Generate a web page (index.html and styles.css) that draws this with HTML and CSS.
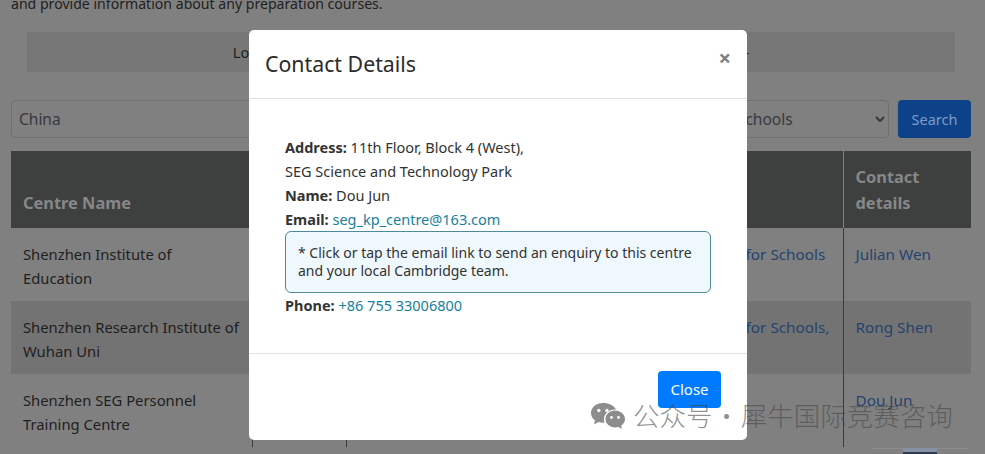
FILE: index.html
```html
<!DOCTYPE html>
<html lang="en">
<head>
    <meta charset="UTF-8">
    <title>Find a centre</title>
    <link rel="stylesheet" href="styles.css">
</head>
<body>
    <p class="intro">and provide information about any preparation courses.</p>
    <div class="notice">Look for a centre near you by selecting a country and the Cambridge exam -</div>

    <form class="search-row">
        <input class="search-input" type="text" value="China">
        <select class="search-select">
            <option>A2 Key for Schools</option>
        </select>
        <button type="button" class="search-btn">Search</button>
    </form>

    <table class="centres">
        <colgroup>
            <col class="col-name">
            <col class="col-city">
            <col class="col-exam">
            <col class="col-contact">
        </colgroup>
        <thead>
            <tr>
                <th>Centre Name</th>
                <th></th>
                <th></th>
                <th>Contact details</th>
            </tr>
        </thead>
        <tbody>
            <tr>
                <td>Shenzhen Institute of Education</td>
                <td></td>
                <td class="exam"><a href="#">A2 Key for Schools</a></td>
                <td><a href="#">Julian Wen</a></td>
            </tr>
            <tr>
                <td>Shenzhen Research Institute of Wuhan Uni</td>
                <td></td>
                <td class="exam"><a href="#">A2 Key for Schools,</a></td>
                <td><a href="#">Rong Shen</a></td>
            </tr>
            <tr>
                <td>Shenzhen SEG Personnel Training Centre</td>
                <td></td>
                <td></td>
                <td><a href="#">Dou Jun</a></td>
            </tr>
        </tbody>
    </table>

    <div class="pager">
        <span class="page-item"></span>
        <span class="page-item active"></span>
        <span class="page-item"></span>
    </div>

    <div class="modal">
        <div class="modal-header">
            <h2>Contact Details</h2>
            <span class="modal-x">&times;</span>
        </div>
        <div class="modal-body">
            <p><b>Address:</b> 11th Floor, Block 4 (West),</p>
            <p>SEG Science and Technology Park</p>
            <p><b>Name:</b> Dou Jun</p>
            <p><b>Email:</b> <a href="#">seg_kp_centre@163.com</a></p>
            <div class="alert">* Click or tap the email link to send an enquiry to this centre and your local Cambridge team.</div>
            <p><b>Phone:</b> <a href="#">+86 755 33006800</a></p>
        </div>
        <div class="modal-footer">
            <button type="button" class="close-btn">Close</button>
        </div>
    </div>

    <div class="watermark">
        <svg width="36" height="30" viewBox="0 0 36 30">
            <path d="M13 1C6 1 1 5.600 1 11c0 3 1.600 5.600 4 7.400L4 22.500l4.500-2.400c1.400.4 2.900.6 4.500.6.500 0 1 0 1.500-.1-.4-1.100-.6-2.200-.6-3.400 0-5.400 5-9.700 11.300-9.700h.7C24.200 3.600 19 1 13 1z" fill="#8c8c8c"/>
            <path d="M35 17c0-4.900-4.700-8.500-10-8.500S15.500 12.100 15.500 17s4.400 8.500 9.500 8.500c1.200 0 2.400-.2 3.500-.5l3.600 2-.9-3.300c2.300-1.700 3.800-4 3.800-6.700z" fill="#8c8c8c"/>
            <circle cx="8.800" cy="8.500" r="1.700" fill="#fff"/>
            <circle cx="17" cy="8.500" r="1.700" fill="#fff"/>
            <circle cx="21.500" cy="15.500" r="1.400" fill="#fff"/>
            <circle cx="28.500" cy="15.500" r="1.400" fill="#fff"/>
        </svg>
        <span class="watermark-text">公众号 · 犀牛国际竞赛咨询</span>
    </div>
</body>
</html>
```
FILE: styles.css
```css
body {
    margin: 0;
    height: 454px;
    overflow: hidden;
    position: relative;
    background-color: #808080;
    color: #1f2020;
    font-family: "Noto Sans", Arial, sans-serif;
    font-size: 14.5px;
}
a {
    color: #26436f;
    text-decoration: none;
}
.intro {
    margin: -6px 0 0 11px;
    font-size: 14.1px;
    line-height: 20px;
    height: 38px;
}
.notice {
    margin: 0 30px 0 27px;
    height: 40px;
    line-height: 40px;
    background-color: #777;
    text-align: center;
    white-space: nowrap;
}
.search-row {
    display: flex;
    gap: 9px;
    margin: 28px 14px 13px 11px;
    height: 38px;
}
.search-input {
    flex: 1;
    padding: 0 7px;
    border: 1px solid #6b7075;
    border-radius: 4px;
    background-color: #808080;
    color: #363a3d;
    font: inherit;
    font-size: 15.5px;
}
.search-select {
    width: 239px;
    padding: 0 4px;
    border: 1px solid #6b7075;
    border-radius: 4px;
    background-color: #808080;
    color: #363a3d;
    font: inherit;
    font-size: 15.5px;
}
.search-btn {
    width: 73px;
    border: none;
    border-radius: 4px;
    background-color: #0d4289;
    color: #7f9cc4;
    font: inherit;
}
.centres {
    width: 960px;
    margin-left: 11px;
    border-collapse: collapse;
    table-layout: fixed;
}
.col-name { width: 241px; }
.col-city { width: 94px; }
.col-contact { width: 128px; }
.centres th {
    height: 77px;
    box-sizing: border-box;
    padding: 12px;
    background-color: #3e4040;
    color: #868788;
    font-size: 16.4px;
    line-height: 26px;
    text-align: left;
    vertical-align: bottom;
}
.centres th:last-child {
    border-left: 1px solid #808080;
}
.centres td {
    padding: 14px 12px 11px;
    line-height: 24px;
    font-size: 14.8px;
    vertical-align: top;
}
.centres td + td {
    border-left: 1px solid #3c3c3c;
}
.centres td a {
    font-size: 15.3px;
}
.centres tbody tr:nth-child(even) td {
    background-color: #737373;
}
.exam {
    white-space: nowrap;
    overflow: hidden;
}
.centres .exam {
    padding-left: 347px;
}
.pager {
    display: flex;
    justify-content: flex-end;
    margin: 1px 17px 0 0;
}
.page-item {
    width: 31px;
    height: 5px;
    border-top: 1px solid #8c8c8c;
}
.page-item.active {
    width: 34px;
    height: 2px;
    border-top: 4px solid #8591a5;
    background-color: #2f3a4f;
}
.modal {
    position: absolute;
    left: 249px;
    top: 30px;
    width: 498px;
    height: 410px;
    background-color: #fff;
    border-radius: 5px;
    display: flex;
    flex-direction: column;
    color: #333;
}
.modal-header {
    height: 69px;
    box-sizing: border-box;
    padding: 0 16px;
    border-bottom: 1px solid #dee2e6;
    display: flex;
    justify-content: space-between;
    align-items: center;
}
.modal-header h2 {
    margin: -2px 0 0;
    font-size: 21.3px;
    font-weight: 400;
    color: #2b2b2b;
}
.modal-x {
    font-size: 22px;
    font-weight: 700;
    color: #808080;
    margin-top: -15px;
}
.modal-body {
    flex: 1;
    padding: 36px 36px 0;
}
.modal-body p {
    margin: 0;
    line-height: 24px;
}
.modal-body a {
    color: #17809c;
}
.alert {
    padding: 12px 12px 0;
    height: 62px;
    box-sizing: border-box;
    border: 1px solid #4f8a9c;
    border-radius: 6px;
    background-color: #eff8fd;
    font-size: 14px;
    line-height: 18px;
}
.modal-footer {
    height: 87px;
    box-sizing: border-box;
    border-top: 1px solid #dee2e6;
    padding: 17px 26px 0 0;
    display: flex;
    justify-content: flex-end;
    align-items: flex-start;
}
.close-btn {
    width: 63px;
    height: 37px;
    padding: 0 0 2px;
    border: none;
    border-radius: 4px;
    background-color: #007bff;
    color: #fff;
    font: inherit;
    font-size: 15px;
}
.watermark {
    position: absolute;
    left: 590px;
    top: 395px;
    display: flex;
    align-items: center;
    gap: 7px;
    color: rgba(70, 70, 70, 0.6);
    font-family: "Noto Sans CJK SC", sans-serif;
    font-size: 26.5px;
    font-weight: 300;
}
.watermark-text {
    margin-bottom: 4px;
    word-spacing: -5px;
}
```
